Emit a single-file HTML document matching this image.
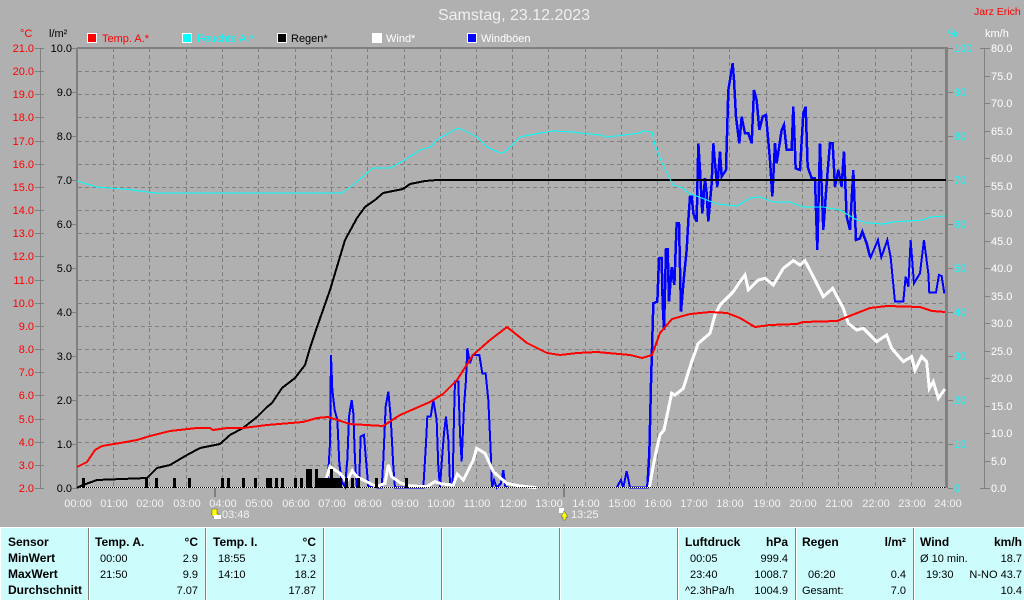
<!DOCTYPE html>
<html><head><meta charset="utf-8"><title>Samstag, 23.12.2023</title>
<style>
html,body{margin:0;padding:0;background:#b0b0b0;width:1024px;height:600px;overflow:hidden}
svg{display:block}
text{font-family:"Liberation Sans",sans-serif;font-size:11px}
.r{text-anchor:end}
.m{text-anchor:middle}
.tb text{fill:#000;font-size:11px}
.tb .b{font-weight:bold;font-size:12px}
.ln{fill:none;stroke-linejoin:miter;shape-rendering:crispEdges}
.z{vector-effect:non-scaling-stroke}
</style></head><body>
<svg width="1024" height="600" viewBox="0 0 1024 600" xmlns="http://www.w3.org/2000/svg">
<rect width="1024" height="600" fill="#b0b0b0"/>
<text x="514" y="20" class="m" style="font-size:16px" fill="#f0f0f0">Samstag, 23.12.2023</text>
<text x="974" y="15" fill="#f00" style="font-size:10.5px">Jarz Erich</text>

<!-- headers -->
<text x="20" y="37" fill="#f00">°C</text>
<text x="49" y="37" fill="#000">l/m²</text>
<text x="948" y="37" fill="#0ff">%</text>
<text x="985" y="37" fill="#fff">km/h</text>

<!-- legend -->
<g stroke="#fff" stroke-width="1" shape-rendering="crispEdges">
<rect x="87.5" y="33.5" width="9" height="9" fill="#f00"/>
<rect x="182.5" y="33.5" width="9" height="9" fill="#0ff"/>
<rect x="277.5" y="33.5" width="9" height="9" fill="#000"/>
<rect x="372.5" y="33.5" width="9" height="9" fill="#fff"/>
<rect x="467.5" y="33.5" width="9" height="9" fill="#00f"/>
</g>
<text x="102" y="42" fill="#f00">Temp. A.*</text>
<text x="197" y="42" fill="#0ff">Feuchte A.*</text>
<text x="291" y="42" fill="#000">Regen*</text>
<text x="386" y="42" fill="#fff">Wind*</text>
<text x="481" y="42" fill="#fff">Windböen</text>

<!-- grid -->
<path class="ln" stroke="#808080" stroke-width="1" stroke-dasharray="4 3" d="M113.5 48V488M149.5 48V488M186.5 48V488M222.5 48V488M258.5 48V488M295.5 48V488M331.5 48V488M367.5 48V488M404.5 48V488M440.5 48V488M476.5 48V488M512.5 48V488M548.5 48V488M585.5 48V488M621.5 48V488M657.5 48V488M693.5 48V488M729.5 48V488M766.5 48V488M802.5 48V488M838.5 48V488M875.5 48V488M911.5 48V488
M78 71.5H945M78 94.5H945M78 117.5H945M78 141.5H945M78 164.5H945M78 187.5H945M78 210.5H945M78 233.5H945M78 256.5H945M78 280.5H945M78 303.5H945M78 326.5H945M78 349.5H945M78 372.5H945M78 395.5H945M78 419.5H945M78 442.5H945M78 465.5H945"/>

<!-- frame -->
<path class="ln" stroke="#808080" stroke-width="2" d="M77 48V488M77 48H947M947 47V488"/>
<path class="ln" stroke="#808080" stroke-width="1" d="M945.5 48V488"/>
<!-- left temp axis -->
<path class="ln" stroke="#808080" stroke-width="1" d="M40.5 48V488M35 48.5H44M35 71.5H44M35 94.5H44M35 117.5H44M35 141.5H44M35 164.5H44M35 187.5H44M35 210.5H44M35 233.5H44M35 256.5H44M35 280.5H44M35 303.5H44M35 326.5H44M35 349.5H44M35 372.5H44M35 395.5H44M35 419.5H44M35 442.5H44M35 465.5H44M35 488.5H44"/>
<path class="ln" stroke="#808080" stroke-width="1" d="M72 48.5H77M72 92.5H77M72 136.5H77M72 180.5H77M72 224.5H77M72 268.5H77M72 312.5H77M72 356.5H77M72 400.5H77M72 444.5H77M72 488.5H77"/>
<!-- right axes -->
<path class="ln" stroke="#808080" stroke-width="1" d="M948 48.5H953M948 92.5H953M948 136.5H953M948 180.5H953M948 224.5H953M948 268.5H953M948 312.5H953M948 356.5H953M948 400.5H953M948 444.5H953M948 488.5H953"/>
<path class="ln" stroke="#808080" stroke-width="1" d="M984.5 48V488M980 48.5H990M984 76.5H990M984 103.5H990M984 131.5H990M984 158.5H990M984 186.5H990M984 213.5H990M984 241.5H990M984 268.5H990M984 296.5H990M984 323.5H990M984 351.5H990M984 378.5H990M984 406.5H990M984 433.5H990M984 461.5H990M980 488.5H990"/>

<!-- temp labels -->
<g fill="#f00" class="r">
<text x="34" y="52">21.0</text><text x="34" y="75">20.0</text><text x="34" y="98">19.0</text><text x="34" y="121">18.0</text><text x="34" y="145">17.0</text><text x="34" y="168">16.0</text><text x="34" y="191">15.0</text><text x="34" y="214">14.0</text><text x="34" y="237">13.0</text><text x="34" y="260">12.0</text><text x="34" y="284">11.0</text><text x="34" y="307">10.0</text><text x="34" y="330">9.0</text><text x="34" y="353">8.0</text><text x="34" y="376">7.0</text><text x="34" y="399">6.0</text><text x="34" y="423">5.0</text><text x="34" y="446">4.0</text><text x="34" y="469">3.0</text><text x="34" y="492">2.0</text>
</g>
<g fill="#000" class="r">
<text x="72" y="52">10.0</text><text x="72" y="96">9.0</text><text x="72" y="140">8.0</text><text x="72" y="184">7.0</text><text x="72" y="228">6.0</text><text x="72" y="272">5.0</text><text x="72" y="316">4.0</text><text x="72" y="360">3.0</text><text x="72" y="404">2.0</text><text x="72" y="448">1.0</text><text x="72" y="492">0.0</text>
</g>
<g fill="#0ff">
<text x="954" y="52">100</text><text x="954" y="96">90</text><text x="954" y="140">80</text><text x="954" y="184">70</text><text x="954" y="228">60</text><text x="954" y="272">50</text><text x="954" y="316">40</text><text x="954" y="360">30</text><text x="954" y="404">20</text><text x="954" y="448">10</text><text x="954" y="492">0</text>
</g>
<g fill="#fff">
<text x="991" y="52">80.0</text><text x="991" y="80">75.0</text><text x="991" y="107">70.0</text><text x="991" y="135">65.0</text><text x="991" y="162">60.0</text><text x="991" y="190">55.0</text><text x="991" y="217">50.0</text><text x="991" y="245">45.0</text><text x="991" y="272">40.0</text><text x="991" y="300">35.0</text><text x="991" y="327">30.0</text><text x="991" y="355">25.0</text><text x="991" y="382">20.0</text><text x="991" y="410">15.0</text><text x="991" y="437">10.0</text><text x="991" y="465">5.0</text><text x="991" y="492">0.0</text>
</g>

<!-- x labels -->
<g fill="#f2f2f2" class="m">
<text x="78" y="507">00:00</text><text x="114" y="507">01:00</text><text x="150" y="507">02:00</text><text x="187" y="507">03:00</text><text x="223" y="507">04:00</text><text x="259" y="507">05:00</text><text x="296" y="507">06:00</text><text x="332" y="507">07:00</text><text x="368" y="507">08:00</text><text x="405" y="507">09:00</text><text x="441" y="507">10:00</text><text x="477" y="507">11:00</text><text x="513" y="507">12:00</text><text x="549" y="507">13:00</text><text x="586" y="507">14:00</text><text x="622" y="507">15:00</text><text x="658" y="507">16:00</text><text x="694" y="507">17:00</text><text x="730" y="507">18:00</text><text x="767" y="507">19:00</text><text x="803" y="507">20:00</text><text x="839" y="507">21:00</text><text x="876" y="507">22:00</text><text x="912" y="507">23:00</text><text x="948" y="507">24:00</text>
</g>
<text x="222" y="518" fill="#f2f2f2">03:48</text>
<text x="571" y="518" fill="#f2f2f2">13:25</text>
<path class="ln" stroke="#808080" stroke-width="2" d="M215 488V497M564 484V497"/>
<!-- sun icons -->
<path d="M212 509h5v5h2l-4 5-4-5h1z" fill="#ff0" stroke="#555" stroke-width=".5"/>
<rect x="214" y="515" width="7" height="4" fill="#fff"/>
<rect x="559" y="508" width="5" height="5" fill="#fff"/>
<path d="M564 511l4 6h-2v3h-3v-3h-2z" fill="#ff0" stroke="#555" stroke-width=".5"/>

<!-- blue -->
<g class="ln" stroke="#00f" stroke-width="2">
<g transform="translate(320,300) scale(.3333)">
<polyline class="z" fill="none" stroke-width="2" points="22,563 30,430 33,165 37,270 44,330 52,360 58,490 65,545 75,560 82,480 87,350 95,300 100,340 105,480 110,560 118,530 122,410 132,405 138,480 145,560 185,563 190,480 197,320 205,275 212,350 220,500 225,563 310,563 318,430 322,350 332,350 340,300 350,360 355,500 360,563 365,490 372,400 378,350 385,420 390,550 398,550 402,350 405,245 415,245 420,400 425,485 432,320 438,240 442,145 450,190 458,165 478,165 487,220 497,220 505,300 512,450 516,563 522,540 530,563 543,550 550,510 556,560 565,563"/>
<polyline class="z" fill="none" stroke-width="2" points="890,563 903,540 910,563 920,513 930,563 985,563"/>
</g>
<g transform="translate(640,240) scale(.3333)">
<polyline class="z" fill="none" stroke-width="2.5" points="22,742 28,640 33,430 40,190 52,185 57,55 65,55 68,190 72,270 78,28 83,28 87,185 95,82 103,135 110,-50 117,-50 123,215 132,110 140,30"/>
<polyline class="z" fill="none" stroke-width="2" points="680,10 692,52 714,0 724,52 742,0 752,52 765,185 790,185 797,110 805,140 812,0 822,130 840,100 852,0 865,100 868,158 888,158 897,105 905,108 913,160"/>
</g>
<g transform="translate(640,50) scale(.3333)">
<polyline class="z" fill="none" stroke-width="2.5" points="140,600 146,495 150,440 155,440 160,490 170,515 175,280 180,360 187,490 195,385 200,430 205,515 215,400 220,280 225,340 232,410 240,305 245,380 258,360 265,120 270,90 278,40 282,90 288,200 298,280 305,200 315,250 325,250 335,280 342,120 350,150 358,240 368,200 378,195 390,330 397,440 405,280 410,340 425,240 432,225 440,300 455,300 460,170 467,355 480,360 490,190 497,170 503,350 515,385 525,385 532,600 540,280 550,540 560,400 570,280 578,280 585,410 595,360 605,410 612,305 620,500 630,540 640,360 648,570 660,565 667,545 680,580 690,620"/>
</g>
</g>

<!-- white -->
<g transform="translate(320,300) scale(.3333)">
<polyline class="ln z" stroke="#fff" stroke-width="3" points="-10,545 18,540 30,500 60,520 80,545 97,512 110,530 140,545 170,560 195,550 205,495 215,530 240,548 270,558 320,560 345,545 365,552 400,555 412,522 430,540 460,480 470,445 495,460 520,515 560,550 600,558 650,563"/>
</g>
<g transform="translate(640,240) scale(.3333)">
<polyline class="ln z" stroke="#fff" stroke-width="3" points="28,742 45,650 60,585 72,570 95,460 105,465 130,445 155,365 175,310 210,280 225,225 240,195 280,155 300,125 315,105 325,150 355,120 375,115 400,135 430,85 460,62 480,75 495,62 520,110 550,170 578,145 610,205 625,250 650,270 670,265 710,305 740,285 755,325 790,365 815,350 825,390 845,350 860,365 868,445 880,425 895,475 915,447"/>
</g>

<!-- baseline dotted -->
<path class="ln" stroke="#fff" stroke-width="1" d="M78 487.5H945"/>
<path class="ln" stroke="#000" stroke-width="1" stroke-dasharray="1 1" d="M78 487.5H945"/>

<!-- rain bars -->
<g fill="#000" shape-rendering="crispEdges">
<rect x="82" y="478" width="3" height="10"/><rect x="145" y="478" width="3" height="10"/><rect x="155" y="478" width="3" height="10"/><rect x="173" y="478" width="3" height="10"/><rect x="188" y="478" width="3" height="10"/><rect x="221" y="478" width="3" height="10"/><rect x="227" y="478" width="3" height="10"/><rect x="242" y="478" width="3" height="10"/><rect x="254" y="478" width="3" height="10"/><rect x="266" y="478" width="6" height="10"/><rect x="275" y="478" width="3" height="10"/><rect x="281" y="478" width="3" height="10"/><rect x="294" y="478" width="3" height="10"/><rect x="300" y="478" width="3" height="10"/><rect x="306" y="469" width="6" height="19"/><rect x="315" y="469" width="3" height="19"/><rect x="318" y="478" width="24" height="10"/><rect x="330" y="469" width="3" height="19"/><rect x="345" y="478" width="3" height="10"/><rect x="351" y="478" width="3" height="10"/><rect x="357" y="478" width="3" height="10"/><rect x="375" y="478" width="3" height="10"/><rect x="405" y="478" width="3" height="10"/>
</g>

<!-- black -->
<polyline class="ln" stroke="#000" stroke-width="2" points="77,488 83,485 97,480 147,478 157,468 170,465 187,455 200,448 220,444 230,435 243,428 257,417 267,407 272,403 282,388 295,378 305,365 310,348 316,330 330,290 345,240 357,218 365,207 375,200 383,193 403,189 410,184 425,181 437,180 946,180"/>

<!-- red -->
<polyline class="ln" stroke="#f00" stroke-width="2" points="77,467 87,462 95,450 102,446 120,443 137,440 150,436 170,431 197,428 210,428 213,430 227,428 243,428 267,425 303,422 317,418 328,417 350,424 383,426 400,415 430,402 443,394 457,380 473,355 490,340 507,327 527,343 547,353 560,355 577,353 597,352 630,355 642,358 652,355 660,333 672,319 690,314 710,312 727,313 740,318 755,327 770,325 797,324 803,322 837,321 847,317 870,308 887,306 920,307 932,311 945,312"/>

<!-- cyan -->
<polyline class="ln" stroke="#0ff" stroke-width="1" points="77,181 97,187 122,189 133,190 140,191 155,193 342,193 353,185 373,168 390,168 403,161 420,150 430,147 438,139 458,128 463,130 477,137 487,147 500,153 505,152 512,145 520,137 540,133 553,131 573,132 580,133 600,135 607,137 640,133 643,131 652,132 655,145 662,163 673,185 683,188 688,193 707,200 717,204 737,206 750,198 760,197 773,202 790,202 803,207 823,207 840,210 857,220 867,223 883,224 893,222 923,220 930,217 945,216"/>

<!-- table -->
<rect x="0" y="527" width="1024" height="73" fill="#ccfcfc"/>
<rect x="0" y="527" width="1024" height="1" fill="#fff"/>
<rect x="0" y="527" width="1" height="73" fill="#fff"/>
<g fill="#808080" shape-rendering="crispEdges">
<rect x="88" y="528" width="1" height="72"/><rect x="205" y="528" width="1" height="72"/><rect x="323" y="528" width="1" height="72"/><rect x="441" y="528" width="1" height="72"/><rect x="559" y="528" width="1" height="72"/><rect x="677" y="528" width="1" height="72"/><rect x="795" y="528" width="1" height="72"/><rect x="913" y="528" width="1" height="72"/>
</g>
<g fill="#fff" shape-rendering="crispEdges">
<rect x="89" y="528" width="1" height="72"/><rect x="206" y="528" width="1" height="72"/><rect x="324" y="528" width="1" height="72"/><rect x="442" y="528" width="1" height="72"/><rect x="560" y="528" width="1" height="72"/><rect x="678" y="528" width="1" height="72"/><rect x="796" y="528" width="1" height="72"/><rect x="914" y="528" width="1" height="72"/>
</g>
<g class="tb">
<text x="8" y="546" class="b">Sensor</text><text x="8" y="562" class="b">MinWert</text><text x="8" y="578" class="b">MaxWert</text><text x="8" y="594" class="b">Durchschnitt</text>

<text x="95" y="546" class="b">Temp. A.</text><text x="198" y="546" class="b r">°C</text>
<text x="100" y="562">00:00</text><text x="198" y="562" class="r">2.9</text>
<text x="100" y="578">21:50</text><text x="198" y="578" class="r">9.9</text>
<text x="198" y="594" class="r">7.07</text>

<text x="213" y="546" class="b">Temp. I.</text><text x="316" y="546" class="b r">°C</text>
<text x="218" y="562">18:55</text><text x="316" y="562" class="r">17.3</text>
<text x="218" y="578">14:10</text><text x="316" y="578" class="r">18.2</text>
<text x="316" y="594" class="r">17.87</text>

<text x="685" y="546" class="b">Luftdruck</text><text x="788" y="546" class="b r">hPa</text>
<text x="690" y="562">00:05</text><text x="788" y="562" class="r">999.4</text>
<text x="690" y="578">23:40</text><text x="788" y="578" class="r">1008.7</text>
<text x="685" y="594">^2.3hPa/h</text><text x="788" y="594" class="r">1004.9</text>

<text x="802" y="546" class="b">Regen</text><text x="906" y="546" class="b r">l/m²</text>
<text x="808" y="578">06:20</text><text x="906" y="578" class="r">0.4</text>
<text x="802" y="594">Gesamt:</text><text x="906" y="594" class="r">7.0</text>

<text x="920" y="546" class="b">Wind</text><text x="1022" y="546" class="b r">km/h</text>
<text x="920" y="562">Ø 10 min.</text><text x="1022" y="562" class="r">18.7</text>
<text x="926" y="578">19:30</text><text x="1022" y="578" class="r">N-NO 43.7</text>
<text x="1022" y="594" class="r">10.4</text>
</g>
</svg>
</body></html>
